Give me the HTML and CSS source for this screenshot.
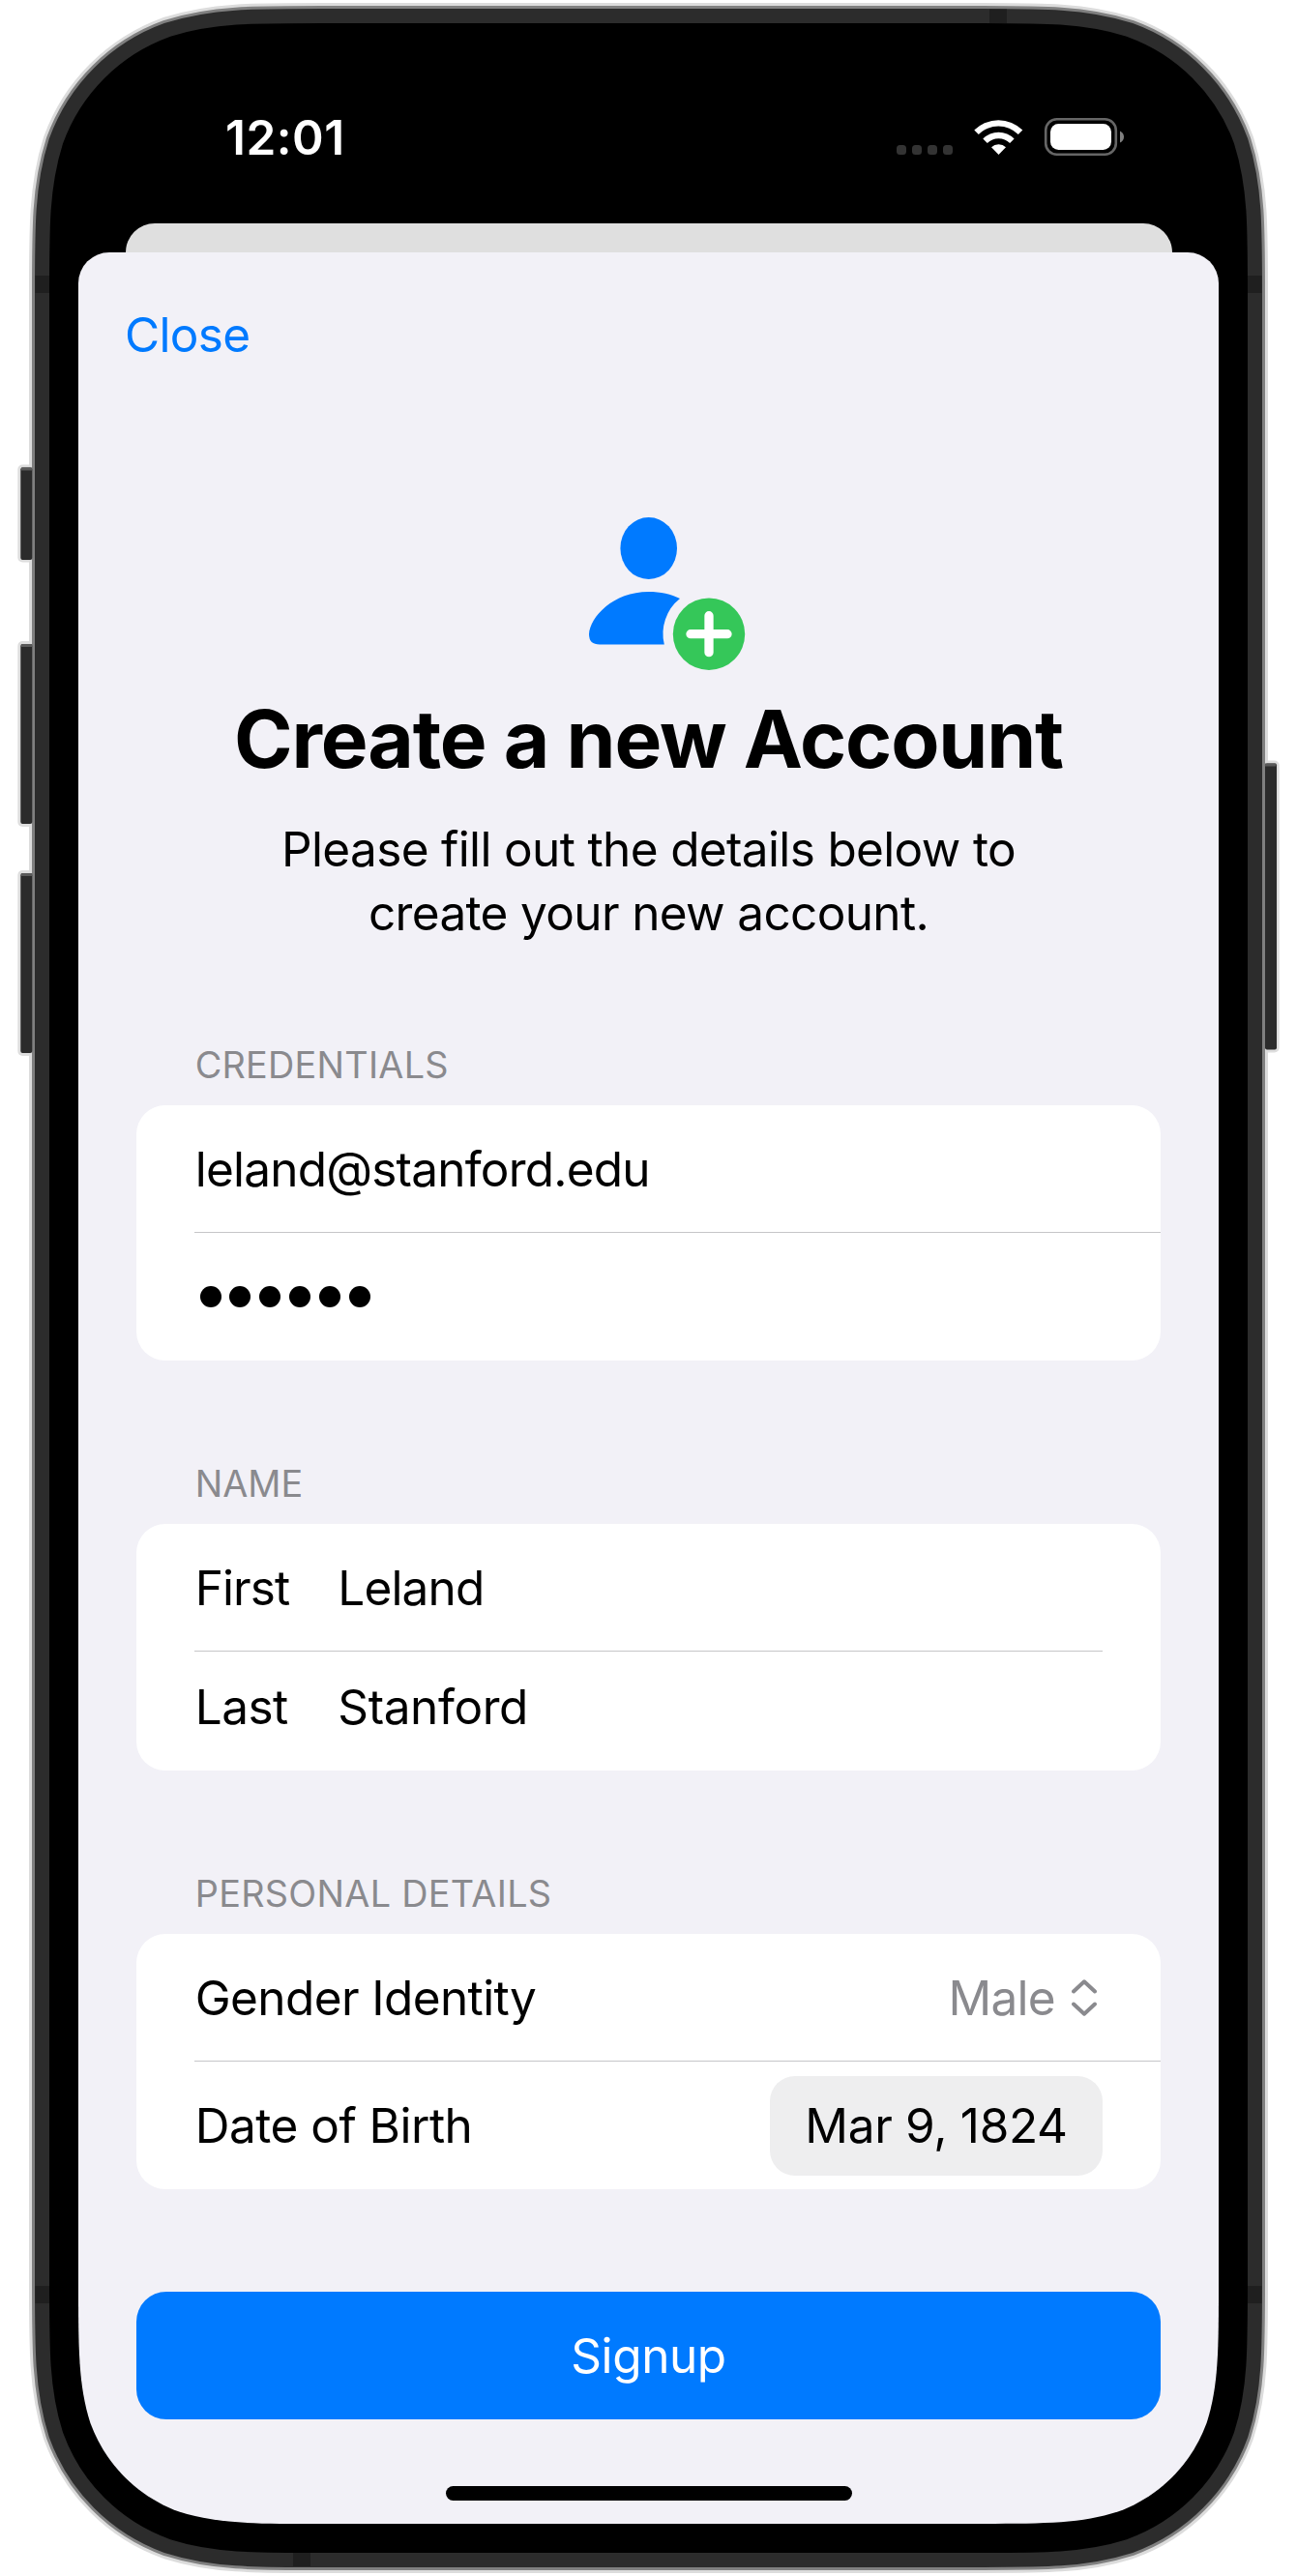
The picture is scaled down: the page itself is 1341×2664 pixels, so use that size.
FILE: index.html
```html
<!DOCTYPE html>
<html lang="en">
<head>
<meta charset="utf-8">
<title>Create a new Account</title>
<link rel="stylesheet" href="styles.css">
</head>
<body>
<div class="device">
  <svg class="shell" width="1341" height="2664" viewBox="0 0 1341 2664" aria-hidden="true">
    <defs>
      <path id="outline" transform="translate(81 54)" d="M252.2 0H926.8C999.400 0 1035.700 0 1074.800 12.400C1117.500 27.900 1151.100 61.500 1166.600 104.200C1179 143.300 1179 179.600 1179 252.200V2303.800C1179 2376.400 1179 2412.700 1166.600 2451.800C1151.100 2494.500 1117.500 2528.100 1074.800 2543.600C1035.700 2556 999.400 2556 926.800 2556H252.200C179.600 2556 143.300 2556 104.200 2543.600C61.500 2528.100 27.900 2494.500 12.400 2451.800C0 2412.700 0 2376.400 0 2303.800V252.200C0 179.600 0 143.300 12.400 104.200C27.900 61.500 61.500 27.900 104.200 12.400C143.300 0 179.600 0 252.200 0Z"/>
    </defs>
    <g class="key-halos">
      <rect x="18.300" y="480.500" width="24" height="101" rx="5"/>
      <rect x="18.300" y="663" width="24" height="192" rx="5"/>
      <rect x="18.300" y="900" width="24" height="192" rx="5"/>
      <rect x="1298.700" y="786.500" width="24" height="302" rx="5"/>
    </g>
    <use href="#outline" class="ring halo"/>
    <use href="#outline" class="ring edge"/>
    <use href="#outline" class="ring body"/>
    <use href="#outline" class="ring bezel"/>
    <g class="keys">
      <rect x="21.300" y="483.500" width="12" height="95.500" rx="2"/>
      <rect x="21.300" y="666" width="12" height="186" rx="2"/>
      <rect x="21.300" y="903" width="12" height="186" rx="2"/>
      <rect x="1308" y="789.500" width="12" height="296" rx="2"/>
    </g>
    <g class="key-tops">
      <rect x="22" y="483.500" width="11.300" height="3"/>
      <rect x="22" y="666" width="11.300" height="3"/>
      <rect x="22" y="903" width="11.300" height="3"/>
      <rect x="1308" y="789.500" width="11.300" height="3"/>
    </g>
    <g class="antenna">
      <rect x="36.500" y="285" width="14.500" height="18"/>
      <rect x="1290" y="285" width="14.500" height="18"/>
      <rect x="36.500" y="2364" width="14.500" height="18"/>
      <rect x="1290" y="2364" width="14.500" height="18"/>
      <rect x="1023" y="9.500" width="18" height="14.500"/>
      <rect x="303" y="2640" width="18" height="14"/>
    </g>
  </svg>
  <main class="screen">
    <header class="status">
      <span class="clock">12:01</span>
      <svg class="indicators" width="236" height="40" viewBox="0 0 236 40" aria-hidden="true">
        <g fill="#333"><rect y="27" width="10" height="10" rx="3.500"/><rect x="16" y="27" width="10" height="10" rx="3.500"/><rect x="32" y="27" width="10" height="10" rx="3.500"/><rect x="48" y="27" width="10" height="10" rx="3.500"/></g>
        <g fill="#fff">
          <path d="M80.300 11.500A35.500 35.500 0 0 1 130.300 11.500L125.800 16A29 29 0 0 0 84.800 16Z"/>
          <path d="M89.300 20.500A22.500 22.500 0 0 1 121.600 20.500L117.100 25A16.500 16.500 0 0 0 93.800 25Z"/>
          <path d="M98 29.200A11 11 0 0 1 113 29.200L105.500 37Z"/>
          <rect x="159" y="5" width="63" height="27" rx="8.500"/>
        </g>
        <rect x="154.200" y="0.200" width="72.600" height="36.600" rx="11.500" fill="none" stroke="#666" stroke-width="2.600"/>
        <path d="M231 12.500Q235 14.500 235 18.500T231 24.500Z" fill="#808080"/>
      </svg>
    </header>
    <div class="sheet-behind"></div>
    <section class="sheet">
      <nav class="bar"><a class="close">Close</a></nav>
      <svg class="hero" width="164" height="160" viewBox="0 0 164 160" aria-hidden="true">
        <ellipse cx="62.700" cy="32" rx="29.300" ry="32" fill="#007aff"/>
        <path d="M12 131.500Q1 131.500 1 121C2 103 26 77 62.500 77C75 77 86 79.500 95 84A46.500 46.500 0 0 0 78.800 131.500Z" fill="#007aff"/>
        <circle cx="125" cy="120.700" r="37.200" fill="#35c759"/>
        <path d="M106 120.700H144M125 101.700V139.700" stroke="#fff" stroke-width="9.300" stroke-linecap="round"/>
      </svg>
      <h1 class="title">Create a new Account</h1>
      <p class="lead">Please fill out the details below to<br>create your new account.</p>

      <h2 class="caption credentials">CREDENTIALS</h2>
      <div class="card">
        <div class="row"><span class="email">leland@stanford.edu</span></div>
        <div class="row ruled"><span class="dots"><i></i><i></i><i></i><i></i><i></i><i></i></span></div>
      </div>

      <h2 class="caption name">NAME</h2>
      <div class="card">
        <div class="row"><span class="label first">First</span><span class="leland">Leland</span></div>
        <div class="row ruled inset short"><span class="label last">Last</span><span class="stanford">Stanford</span></div>
      </div>

      <h2 class="caption personal">PERSONAL DETAILS</h2>
      <div class="card">
        <div class="row"><span class="gender">Gender Identity</span>
          <span class="picker"><span class="male">Male</span>
            <svg width="26" height="38" viewBox="0 0 26 38" aria-hidden="true"><path d="M2 12.500L13 2.300L24 12.500M2 25.500L13 35.700L24 25.500" fill="none" stroke="#8a8a8e" stroke-width="4" stroke-linecap="round" stroke-linejoin="round"/></svg>
          </span>
        </div>
        <div class="row ruled"><span class="birth">Date of Birth</span><span class="date">Mar 9, 1824</span></div>
      </div>
      <button class="signup">Signup</button>
      <div class="home"></div>
    </section>
  </main>
</div>
</body>
</html>
```
FILE: styles.css
```css
* { box-sizing: border-box; }
body { margin: 0; background: #fff; font-family: Inter, "Liberation Sans", sans-serif; font-size: 49.5px; line-height: 66px; letter-spacing: -0.7px; color: #000; }

/* Device shell */
.device { position: relative; width: 1341px; height: 2664px; padding: 54px 81px; overflow: hidden; }
.shell { position: absolute; left: 0; top: 0; }
.ring { stroke-linejoin: round; }
.halo { fill: #dcdcdc; stroke: #dcdcdc; stroke-width: 102px; }
.edge { fill: #808080; stroke: #808080; stroke-width: 96px; }
.body { fill: #2c2c2c; stroke: #2c2c2c; stroke-width: 90px; }
.bezel { fill: #000; stroke: #000; stroke-width: 60px; }
.key-halos rect { fill: #dedede; }
.keys rect { fill: #2b2b2b; }
.key-tops rect { fill: #5a5a5a; }
.antenna rect { fill: #1f1f1f; }

/* Screen, clipped to continuous corners */
.screen {
  position: relative; width: 1179px; height: 2556px; background: #000; display: flex; flex-direction: column;
  clip-path: path("M252.2 0H926.8C999.4 0 1035.7 0 1074.8 12.4C1117.5 27.9 1151.1 61.5 1166.6 104.2C1179 143.3 1179 179.6 1179 252.2V2303.8C1179 2376.4 1179 2412.7 1166.6 2451.8C1151.1 2494.5 1117.5 2528.1 1074.8 2543.6C1035.7 2556 999.4 2556 926.8 2556H252.2C179.6 2556 143.3 2556 104.2 2543.6C61.5 2528.1 27.9 2494.5 12.4 2451.8C0 2412.7 0 2376.4 0 2303.8V252.2C0 179.6 0 143.3 12.4 104.2C27.9 61.5 61.5 27.9 104.2 12.4C143.3 0 179.6 0 252.2 0Z");
}
.status { height: 177px; padding: 54px 97px 0 152px; display: flex; justify-content: space-between; align-items: flex-start; color: #fff; }
.clock { font-weight: 600; letter-spacing: 0.5px; white-space: nowrap; margin-top: 1px; }
.indicators { margin-top: 15px; overflow: visible; }
.sheet-behind { height: 30px; margin: 0 48.5px; background: #dfdfdf; border-radius: 30px 30px 0 0; }
.sheet { flex: 1; background: #f2f1f7; border-radius: 32px 32px 0 0; padding: 0 60px; display: flex; flex-direction: column; }
.bar { height: 274px; padding: 52px 0 0; margin-left: -12px; }
.close { color: #007aff; }
.hero { align-self: center; flex: none; margin-left: 38px; }
.title { margin: 25px 0 0; font-size: 82px; line-height: 90px; font-weight: 700; letter-spacing: -1.15px; text-align: center; white-space: nowrap; }
.lead { margin: 35px 0 0; text-align: center; letter-spacing: -0.65px; white-space: nowrap; }

/* Form groups */
.caption { margin: 0 0 18px; height: 48px; padding-left: 60.7px; font-size: 37.8px; line-height: 48px; font-weight: 400; letter-spacing: 0.25px; color: #8a8a8e; white-space: nowrap; }
.credentials { margin-top: 100px; }
.name { margin-top: 103px; letter-spacing: 0; }
.personal { margin-top: 103px; letter-spacing: 0.3px; }
.card { background: #fff; border-radius: 30px; overflow: hidden; flex: none; }
.row { position: relative; height: 132px; padding: 0 60px 0 60.7px; display: flex; align-items: center; white-space: nowrap; }
.row.short { height: 123px; padding-bottom: 9px; }
.ruled::before { content: ""; position: absolute; top: -1px; left: 60px; right: 0; height: 1px; background: #c6c6c8; }
.inset::before { right: 60px; }
.label { width: 147.6px; }
.email { letter-spacing: -0.78px; }
.first { letter-spacing: -0.9px; }
.leland { letter-spacing: -0.85px; }
.last { letter-spacing: -0.5px; }
.stanford { letter-spacing: -0.4px; }
.gender { letter-spacing: -0.6px; }
.birth { letter-spacing: -0.5px; }
.dots { display: flex; gap: 8.8px; padding-left: 5px; }
.dots i { width: 22px; height: 22px; border-radius: 50%; background: #000; }
.picker { margin-left: auto; display: flex; align-items: center; gap: 17px; padding-right: 6px; color: #8a8a8e; }
.date { margin-left: auto; width: 344px; height: 103px; border-radius: 26px; background: #eeeeef; display: flex; align-items: center; justify-content: center; letter-spacing: -0.3px; }
.signup { margin: 106px 0 0; height: 132px; border: 0; padding: 0; border-radius: 31px; background: #007aff; color: #fff; font: inherit; letter-spacing: -0.4px; flex: none; }
.home { width: 420px; height: 15px; margin: 69px auto 0; border-radius: 8px; background: #000; flex: none; }
```
